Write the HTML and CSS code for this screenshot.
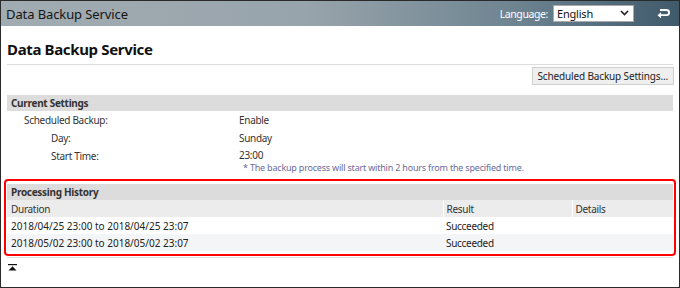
FILE: index.html
```html
<!DOCTYPE html>
<html>
<head>
<meta charset="utf-8">
<link rel="stylesheet" href="styles.css">
</head>
<body>
<div class="frame">
  <header class="topbar">
    <div class="app-name">Data Backup Service</div>
    <div class="top-tools">
      <label class="lang-label" for="lang">Language:</label>
      <div class="lang-select" id="lang">
        <span>English</span>
        <svg class="chev" width="9" height="6" viewBox="0 0 9 6"><path d="M1 1 L4.5 4.5 L8 1" fill="none" stroke="#222" stroke-width="1.6"/></svg>
      </div>
      <svg class="return-icon" width="13" height="11" viewBox="0 0 13 11">
        <path d="M3 2 H9.5 A2.6 2.6 0 0 1 9.5 7.2 H3" fill="none" stroke="#fff" stroke-width="1.8"/>
        <path d="M0.5 7.2 L4 4.2 V10.2 Z" fill="#fff"/>
      </svg>
    </div>
  </header>

  <main class="content">
    <h1 class="page-title">Data Backup Service</h1>
    <div class="rule"></div>
    <div class="actions">
      <button class="btn">Scheduled Backup Settings...</button>
    </div>

    <section class="section">
      <h2 class="section-head">Current Settings</h2>
      <div class="setting-row">
        <div class="label lvl1">Scheduled Backup:</div>
        <div class="value">Enable</div>
      </div>
      <div class="setting-row">
        <div class="label lvl2">Day:</div>
        <div class="value">Sunday</div>
      </div>
      <div class="setting-row tall">
        <div class="label lvl2">Start Time:</div>
        <div class="value">
          <div class="time">23:00</div>
          <div class="note">* The backup process will start within 2 hours from the specified time.</div>
        </div>
      </div>
    </section>

    <div class="highlight">
      <h2 class="section-head">Processing History</h2>
      <table class="history">
        <thead>
          <tr><th class="c-dur">Duration</th><th class="c-res">Result</th><th class="c-det">Details</th></tr>
        </thead>
        <tbody>
          <tr><td class="date">2018/04/25 23:00 to 2018/04/25 23:07</td><td>Succeeded</td><td></td></tr>
          <tr class="alt"><td class="date">2018/05/02 23:00 to 2018/05/02 23:07</td><td>Succeeded</td><td></td></tr>
        </tbody>
      </table>
    </div>
    <div class="rule bottom-rule"></div>
    <a class="to-top" href="#">
      <svg width="9" height="7" viewBox="0 0 9 7"><rect x="0" y="0" width="9" height="1.2" fill="#111"/><path d="M0.5 6.5 L4.5 2.2 L8.5 6.5 Z" fill="#111"/></svg>
    </a>
  </main>
</div>
</body>
</html>
```

FILE: styles.css
```css
* { box-sizing: border-box; }
html, body { margin: 0; padding: 0; }
body {
  font-family: "Noto Sans", "DejaVu Sans", sans-serif;
  font-size: 10px;
  letter-spacing: -0.3px;
  color: #222;
  background: #fff;
}
.frame {
  width: 680px;
  height: 288px;
  border: 1px solid #2a2a2a;
  overflow: hidden;
  display: flex;
  flex-direction: column;
}
.topbar {
  height: 25px;
  flex: none;
  display: flex;
  align-items: center;
  justify-content: space-between;
  padding: 0 9px 0 5px;
  background: linear-gradient(to right, #a1abb2 0%, #98a4ab 45%, #6f8592 75%, #3f5a6b 100%);
}
.app-name {
  font-size: 13px;
  letter-spacing: -0.1px;
  color: #151515;
}
.top-tools {
  display: flex;
  align-items: center;
}
.lang-label {
  color: #fff;
  font-size: 10.5px;
  letter-spacing: -0.4px;
  margin-right: 5px;
}
.lang-select {
  width: 81px;
  height: 17px;
  background: #fff;
  border: 1px solid #a9a9a9;
  display: flex;
  align-items: center;
  justify-content: space-between;
  padding: 0 4px 0 3px;
  font-size: 11px;
  letter-spacing: -0.2px;
  color: #111;
}
.chev { margin-top: -2px; }
.return-icon { margin-left: 23px; }

.content {
  padding: 0 6px;
  flex: 1;
}
.page-title {
  margin: 13px 0 0 0;
  font-size: 15px;
  font-weight: bold;
  letter-spacing: -0.35px;
  line-height: 20px;
  color: #111;
}
.rule {
  height: 1px;
  background: #dcdcdc;
  margin-top: 5px;
}
.actions {
  display: flex;
  justify-content: flex-end;
  margin-top: 2px;
}
.btn {
  font-family: inherit;
  font-size: 10px;
  letter-spacing: -0.15px;
  color: #222;
  height: 18px;
  margin-right: -1px;
  padding: 0 5px;
  background: #efefef;
  border: 1px solid #cfcfcf;
  border-radius: 0;
}
.section { margin-top: 10px; }
.section-head {
  margin: 0;
  height: 16px;
  line-height: 16px;
  background: #dcdcdc;
  font-size: 10px;
  font-weight: bold;
  letter-spacing: -0.3px;
  color: #333;
  padding-left: 4px;
}
.setting-row {
  display: flex;
  height: 18px;
  line-height: 18px;
  color: #333;
}
.setting-row.tall { height: auto; }
.label { width: 232px; flex: none; }
.lvl1 { padding-left: 17px; }
.lvl2 { padding-left: 44px; }
.time { line-height: 16px; }
.note {
  font-size: 9px;
  line-height: 10px;
  letter-spacing: -0.2px;
  color: #6b6b9a;
  padding-left: 4px;
}
.highlight {
  margin: 6px -3px 0 -3px;
  border: 2px solid #ff0000;
  border-radius: 4px;
  padding: 3px 1px 3px 1px;
}
.history {
  width: 100%;
  border-collapse: collapse;
}
.history th, .history td {
  font-weight: normal;
  text-align: left;
  height: 17px;
  padding: 0 0 0 3px;
  color: #222;
  font-size: 10px;
}
.history th:first-child, .history td:first-child { padding-left: 4px; }
.history thead th {
  background: #ececec;
  color: #333;
  border-left: 1px solid #fff;
}
.history thead th:first-child { border-left: none; }
.history td { background: #fff; }
.history td.date { letter-spacing: 0; }
.history tr.alt td { background: #f4f5f7; }
.c-dur { width: 436px; }
.c-res { width: 129px; }
.bottom-rule { margin-top: 1px; }
.to-top {
  display: block;
  margin: 6px 0 0 1px;
  width: 9px;
  line-height: 0;
}
```
